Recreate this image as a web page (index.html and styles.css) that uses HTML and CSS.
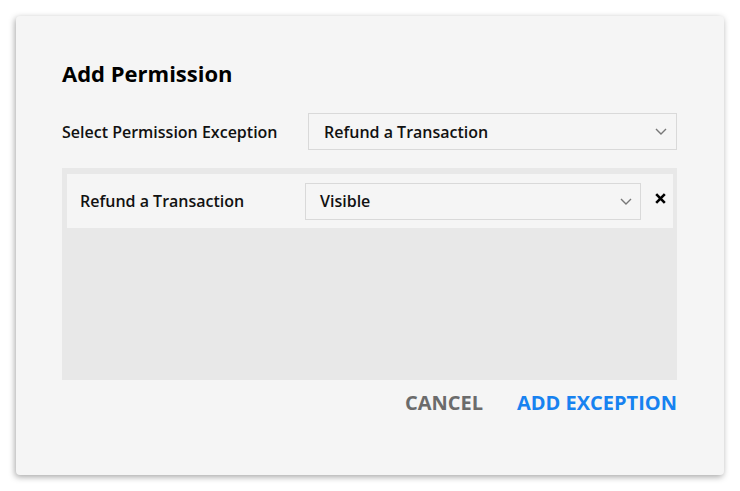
FILE: index.html
```html
<!DOCTYPE html>
<html lang="en">
<head>
    <meta charset="UTF-8">
    <title>Add Permission</title>
    <link rel="stylesheet" href="styles.css">
</head>
<body>

    <div class="dialog">
        <h2 class="dialog--title">Add Permission</h2>

        <div class="field">
            <label class="field--label">Select Permission Exception</label>
            <div class="select select-wide">
                <span>Refund a Transaction</span>
                <svg class="chevron" width="12" height="7" viewBox="0 0 12 7"><polyline points="1,1 6,6 11,1" fill="none" stroke="#777" stroke-width="1.4"/></svg>
            </div>
        </div>

        <div class="exceptions">
            <div class="exception">
                <span class="exception--name">Refund a Transaction</span>
                <div class="select select-row">
                    <span>Visible</span>
                    <svg class="chevron" width="12" height="7" viewBox="0 0 12 7"><polyline points="1,1 6,6 11,1" fill="none" stroke="#777" stroke-width="1.4"/></svg>
                </div>
                <svg class="remove" width="11" height="11" viewBox="0 0 11 11"><path d="M1.2 1.2 L9.8 9.8 M9.8 1.2 L1.2 9.8" stroke="#000" stroke-width="2.6"/></svg>
            </div>
        </div>

        <div class="actions">
            <button class="btn btn-cancel">Cancel</button>
            <button class="btn btn-primary">Add Exception</button>
        </div>
    </div>

</body>
</html>
```

FILE: styles.css
```css
html, body {
    height: 100%;
}
body {
    margin: 0;
    padding: 16px;
    box-sizing: border-box;
    background-color: #ffffff;
    font-family: 'Open Sans', sans-serif;
    color: #111111;
}

.dialog {
    width: 708px;
    height: 459px;
    box-sizing: border-box;
    padding: 43px 47px 0 46px;
    background-color: #f5f5f5;
    border-radius: 4px;
    box-shadow: -1px 2px 6px rgba(0, 0, 0, .35);
}

.dialog--title {
    margin: 0;
    font-size: 22px;
    font-weight: 700;
    line-height: 29px;
    color: #000000;
}

.field {
    display: flex;
    align-items: center;
    margin-top: 25px;
}
.field--label {
    width: 246px;
    font-size: 16px;
    font-weight: 600;
}

.select {
    display: flex;
    align-items: center;
    justify-content: space-between;
    box-sizing: border-box;
    height: 37px;
    border: 1px solid #d9d9d9;
    background-color: #f5f5f5;
    font-size: 16px;
    font-weight: 600;
}
.select-wide {
    width: 369px;
    padding: 0 9px 0 15px;
}
.select-row {
    width: 336px;
    padding: 0 8px 0 14px;
}

.exceptions {
    height: 212px;
    box-sizing: border-box;
    margin-top: 18px;
    padding: 6px 4px 6px 5px;
    background-color: #e8e8e8;
}
.exception {
    display: flex;
    align-items: center;
    height: 54px;
    padding-left: 13px;
    background-color: #f5f5f5;
}
.exception--name {
    width: 225px;
    font-size: 16px;
    font-weight: 600;
}
.remove {
    margin: -6px 0 0 14px;
}

.actions {
    display: flex;
    justify-content: flex-end;
    gap: 34px;
    margin-top: 9px;
}
.btn {
    padding: 0;
    border: 0;
    background: none;
    font-family: 'Open Sans', sans-serif;
    font-size: 20px;
    font-weight: 700;
    line-height: 28px;
    text-transform: uppercase;
    cursor: pointer;
}
.btn-cancel {
    color: #6b6b6b;
}
.btn-primary {
    color: #1782f0;
}
```
